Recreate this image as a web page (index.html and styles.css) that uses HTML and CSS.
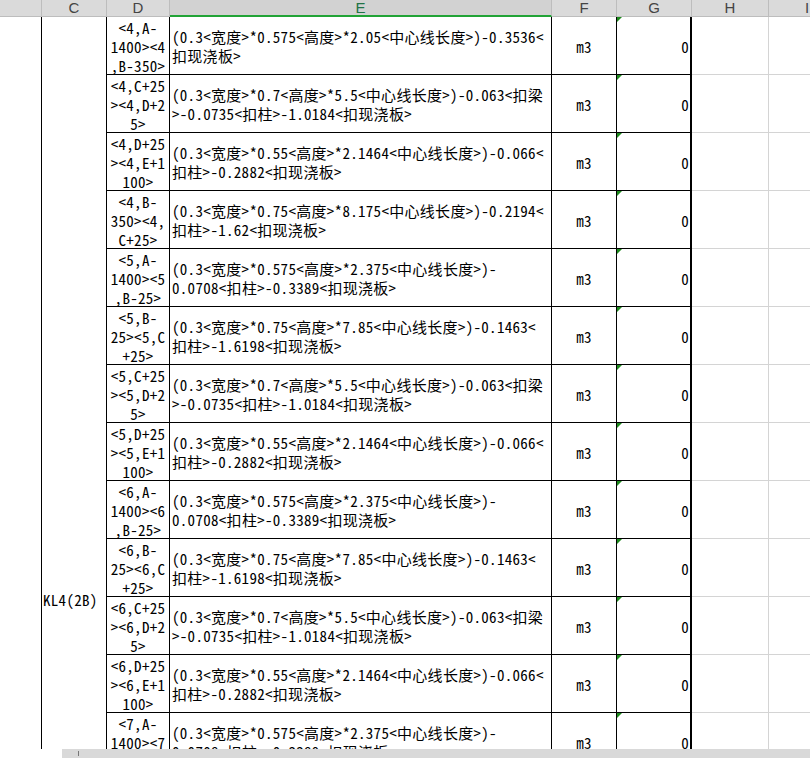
FILE: index.html
```html
<!DOCTYPE html>
<html lang="zh-CN">
<head>
<meta charset="utf-8">
<title>Sheet</title>
<link rel="stylesheet" href="styles.css">
</head>
<body>
<div class="sheet">
  <div class="grid">
    <div class="hd"></div>
    <div class="hd">C</div>
    <div class="hd">D</div>
    <div class="hd sel">E</div>
    <div class="hd">F</div>
    <div class="hd">G</div>
    <div class="hd">H</div>
    <div class="hd">I</div>

    <div class="bcol"></div>
    <div class="merged">KL4(2B)</div>

    <div class="cell d">&lt;4,A-<br>1400&gt;&lt;4<br>,B-350&gt;</div>
    <div class="cell e">(0.3&lt;宽度&gt;*0.575&lt;高度&gt;*2.05&lt;中心线长度&gt;)-0.3536&lt;<br>扣现浇板&gt;</div>
    <div class="cell f">m3</div>
    <div class="cell g">0</div>
    <div class="blank"></div>
    <div class="blank"></div>

    <div class="cell d">&lt;4,C+25<br>&gt;&lt;4,D+2<br>5&gt;</div>
    <div class="cell e">(0.3&lt;宽度&gt;*0.7&lt;高度&gt;*5.5&lt;中心线长度&gt;)-0.063&lt;扣梁<br>&gt;-0.0735&lt;扣柱&gt;-1.0184&lt;扣现浇板&gt;</div>
    <div class="cell f">m3</div>
    <div class="cell g">0</div>
    <div class="blank"></div>
    <div class="blank"></div>

    <div class="cell d">&lt;4,D+25<br>&gt;&lt;4,E+1<br>100&gt;</div>
    <div class="cell e">(0.3&lt;宽度&gt;*0.55&lt;高度&gt;*2.1464&lt;中心线长度&gt;)-0.066&lt;<br>扣柱&gt;-0.2882&lt;扣现浇板&gt;</div>
    <div class="cell f">m3</div>
    <div class="cell g">0</div>
    <div class="blank"></div>
    <div class="blank"></div>

    <div class="cell d">&lt;4,B-<br>350&gt;&lt;4,<br>C+25&gt;</div>
    <div class="cell e">(0.3&lt;宽度&gt;*0.75&lt;高度&gt;*8.175&lt;中心线长度&gt;)-0.2194&lt;<br>扣柱&gt;-1.62&lt;扣现浇板&gt;</div>
    <div class="cell f">m3</div>
    <div class="cell g">0</div>
    <div class="blank"></div>
    <div class="blank"></div>

    <div class="cell d">&lt;5,A-<br>1400&gt;&lt;5<br>,B-25&gt;</div>
    <div class="cell e">(0.3&lt;宽度&gt;*0.575&lt;高度&gt;*2.375&lt;中心线长度&gt;)-<br>0.0708&lt;扣柱&gt;-0.3389&lt;扣现浇板&gt;</div>
    <div class="cell f">m3</div>
    <div class="cell g">0</div>
    <div class="blank"></div>
    <div class="blank"></div>

    <div class="cell d">&lt;5,B-<br>25&gt;&lt;5,C<br>+25&gt;</div>
    <div class="cell e">(0.3&lt;宽度&gt;*0.75&lt;高度&gt;*7.85&lt;中心线长度&gt;)-0.1463&lt;<br>扣柱&gt;-1.6198&lt;扣现浇板&gt;</div>
    <div class="cell f">m3</div>
    <div class="cell g">0</div>
    <div class="blank"></div>
    <div class="blank"></div>

    <div class="cell d">&lt;5,C+25<br>&gt;&lt;5,D+2<br>5&gt;</div>
    <div class="cell e">(0.3&lt;宽度&gt;*0.7&lt;高度&gt;*5.5&lt;中心线长度&gt;)-0.063&lt;扣梁<br>&gt;-0.0735&lt;扣柱&gt;-1.0184&lt;扣现浇板&gt;</div>
    <div class="cell f">m3</div>
    <div class="cell g">0</div>
    <div class="blank"></div>
    <div class="blank"></div>

    <div class="cell d">&lt;5,D+25<br>&gt;&lt;5,E+1<br>100&gt;</div>
    <div class="cell e">(0.3&lt;宽度&gt;*0.55&lt;高度&gt;*2.1464&lt;中心线长度&gt;)-0.066&lt;<br>扣柱&gt;-0.2882&lt;扣现浇板&gt;</div>
    <div class="cell f">m3</div>
    <div class="cell g">0</div>
    <div class="blank"></div>
    <div class="blank"></div>

    <div class="cell d">&lt;6,A-<br>1400&gt;&lt;6<br>,B-25&gt;</div>
    <div class="cell e">(0.3&lt;宽度&gt;*0.575&lt;高度&gt;*2.375&lt;中心线长度&gt;)-<br>0.0708&lt;扣柱&gt;-0.3389&lt;扣现浇板&gt;</div>
    <div class="cell f">m3</div>
    <div class="cell g">0</div>
    <div class="blank"></div>
    <div class="blank"></div>

    <div class="cell d">&lt;6,B-<br>25&gt;&lt;6,C<br>+25&gt;</div>
    <div class="cell e">(0.3&lt;宽度&gt;*0.75&lt;高度&gt;*7.85&lt;中心线长度&gt;)-0.1463&lt;<br>扣柱&gt;-1.6198&lt;扣现浇板&gt;</div>
    <div class="cell f">m3</div>
    <div class="cell g">0</div>
    <div class="blank"></div>
    <div class="blank"></div>

    <div class="cell d">&lt;6,C+25<br>&gt;&lt;6,D+2<br>5&gt;</div>
    <div class="cell e">(0.3&lt;宽度&gt;*0.7&lt;高度&gt;*5.5&lt;中心线长度&gt;)-0.063&lt;扣梁<br>&gt;-0.0735&lt;扣柱&gt;-1.0184&lt;扣现浇板&gt;</div>
    <div class="cell f">m3</div>
    <div class="cell g">0</div>
    <div class="blank"></div>
    <div class="blank"></div>

    <div class="cell d">&lt;6,D+25<br>&gt;&lt;6,E+1<br>100&gt;</div>
    <div class="cell e">(0.3&lt;宽度&gt;*0.55&lt;高度&gt;*2.1464&lt;中心线长度&gt;)-0.066&lt;<br>扣柱&gt;-0.2882&lt;扣现浇板&gt;</div>
    <div class="cell f">m3</div>
    <div class="cell g">0</div>
    <div class="blank"></div>
    <div class="blank"></div>

    <div class="cell d">&lt;7,A-<br>1400&gt;&lt;7<br>,B-25&gt;</div>
    <div class="cell e">(0.3&lt;宽度&gt;*0.575&lt;高度&gt;*2.375&lt;中心线长度&gt;)-<br>0.0708&lt;扣柱&gt;-0.3389&lt;扣现浇板&gt;</div>
    <div class="cell f">m3</div>
    <div class="cell g">0</div>
    <div class="blank"></div>
    <div class="blank"></div>
  </div>
</div>
<div class="hscroll">
  <div class="pad"></div>
  <div class="track"><span class="tick"></span></div>
</div>
</body>
</html>
```
FILE: styles.css
```css
* { box-sizing: border-box; }
html, body { margin: 0; padding: 0; background: #fff; overflow: hidden; }
body {
  width: 810px;
  height: 758px;
  display: flex;
  flex-direction: column;
  font-family: "Noto Sans Mono CJK SC", "Liberation Mono", "Noto Sans CJK SC", monospace;
  font-size: 15px;
  letter-spacing: 0.3px;
  color: #000;
}
.sheet { height: 749px; flex: none; overflow: hidden; }
.grid {
  display: grid;
  grid-template-columns: 42px 65px 63px 382px 65px 75px 77px 77px;
  grid-template-rows: 17px;
  grid-auto-rows: 58px;
  width: 846px;
}
.hd {
  background: #dadada;
  border-right: 1px solid #bdbdbd;
  border-bottom: 1px solid #bdbdbd;
  font-family: "Liberation Sans", Arial, sans-serif;
  font-size: 15px;
  letter-spacing: 0;
  color: #444;
  display: flex;
  align-items: center;
  justify-content: center;
  line-height: 16px;
}
.hd.sel { background: #d2d2d2; color: #217346; border-bottom: 2px solid #21a336; }
.bcol { grid-column: 1; grid-row: 2 / span 20; border-right: 1px solid #000; }
.merged {
  grid-column: 2;
  grid-row: 2 / span 20;
  border-right: 1px solid #000;
  display: flex;
  align-items: center;
  padding: 4px 0 0 1px;
  white-space: nowrap;
  line-height: 19px;
}
.cell {
  border-right: 1px solid #000;
  border-bottom: 1px solid #000;
  display: flex;
  align-items: center;
  white-space: nowrap;
  line-height: 19px;
  padding-top: 1px;
}
.d { justify-content: center; text-align: center; }
.e { padding-left: 2px; }
.f { justify-content: center; }
.g { justify-content: flex-end; padding-right: 1px; border-right-width: 2px; position: relative; }
.g::before {
  content: "";
  position: absolute;
  left: 0;
  top: 0;
  border-top: 5px solid #1c8a1c;
  border-right: 5px solid transparent;
}
.blank { border-right: 1px solid #d4d4d4; border-bottom: 1px solid #d4d4d4; }
.hscroll { height: 9px; display: flex; flex: none; }
.hscroll .pad { width: 62px; background: #fff; }
.hscroll .track { flex: 1; background: #d9d9d9; display: flex; align-items: center; padding-left: 16px; }
.tick { width: 1px; height: 5px; background: #777; }
```
